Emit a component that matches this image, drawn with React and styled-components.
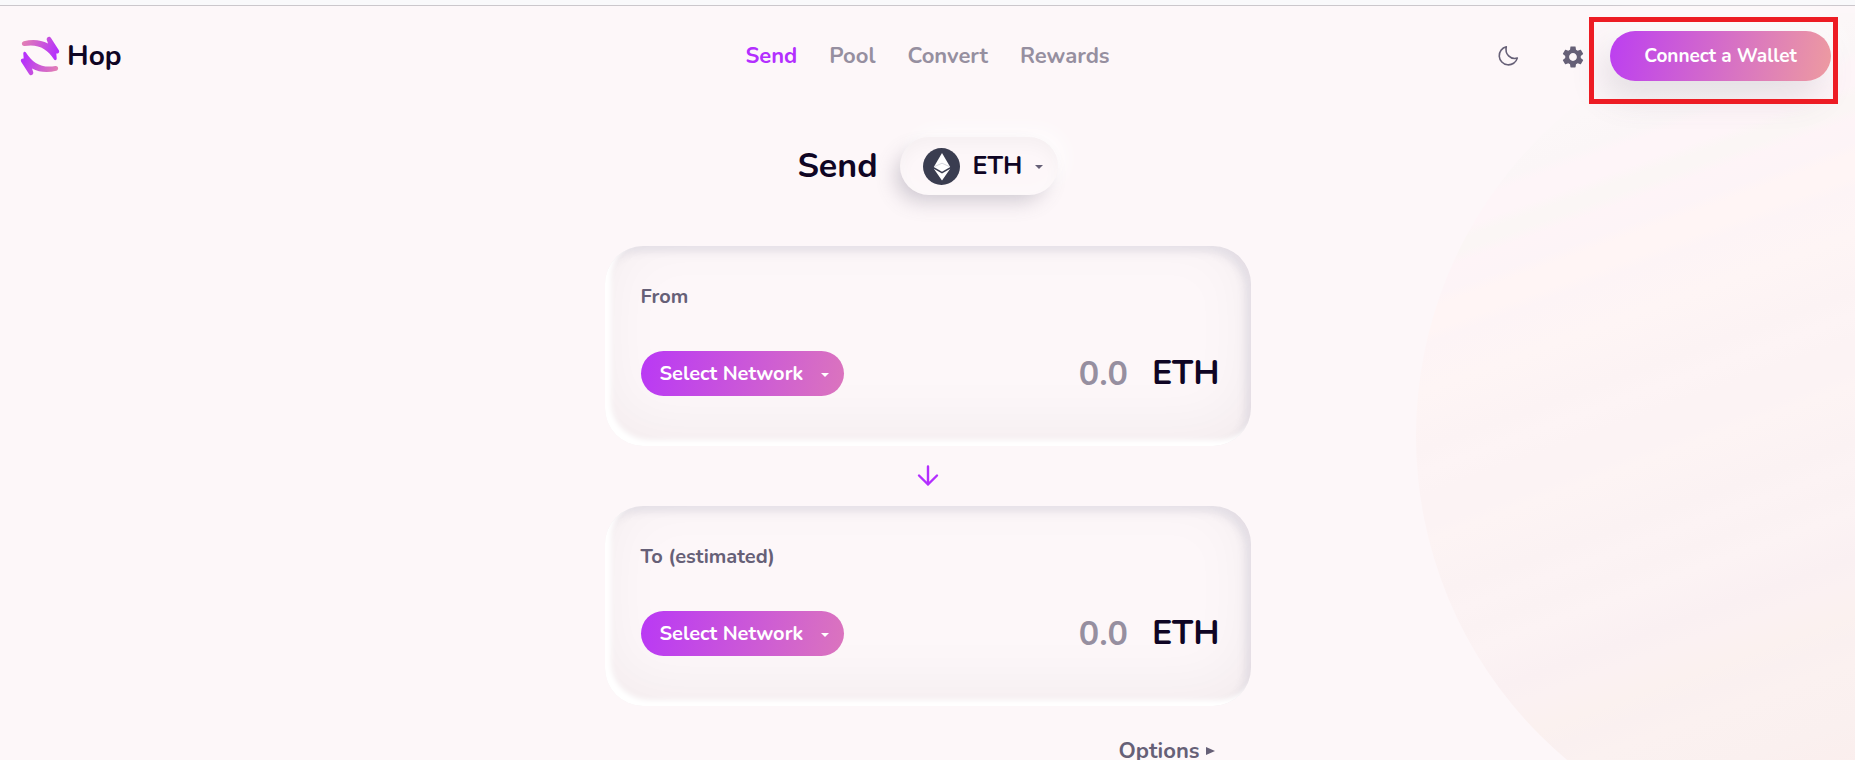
import React from 'react';
import styled, { createGlobalStyle } from 'styled-components';

const ink = '#0f0524';
const muted = '#666077';
const faded = '#968fa0';
const purple = '#b32eff';
const brand = 'linear-gradient(99.85deg, #b32eff -18%, #f2a498 110%)';

const GlobalStyle = createGlobalStyle`
  *, *::before, *::after { box-sizing: border-box; }
  body {
    margin: 0;
    background: #fdf7f9;
    color: ${ink};
    font-family: Nunito, Lato, sans-serif;
    font-weight: 700;
  }
  button, input, select { font: inherit; color: inherit; }
`;

const Page = styled.div`
  position: relative;
  min-height: 100vh;
  max-height: 100vh;
  overflow: hidden;
  isolation: isolate;
`;

const Planet = styled.div`
  position: absolute;
  z-index: -1;
  top: 13px;
  right: -407px;
  width: 846px;
  height: 846px;
  border-radius: 50%;
  background: linear-gradient(
    160deg,
    #fdf7f9 8%,
    #fcf7f8 14%,
    #fbf6f7 17%,
    #fef5f8 18%,
    #fef5f8 20%,
    #fbf6f5 21%,
    #fbf6f5 22%,
    #fef4f7 23%,
    #fdf4f7 25%,
    #fff5f5 26%,
    #fff5f5 28%,
    #fdf4f6 29%,
    #fef5f5 33%,
    #fcf3f4 38%,
    #fdf4f5 40%,
    #fcf3f4 42%,
    #fcf3f4 45%,
    #fdf4f4 46%,
    #fbf2f3 51%,
    #fcf3f4 53%,
    #fbf2f3 55%,
    #fcf3f4 57%,
    #faf0f2 61%,
    #fbf1f2 63%,
    #fbf1ef 66%,
    #faf0f0 68%,
    #fbf1f0 70%,
    #faf0ef 75%,
    #fbeeed 80%,
    #fbeded 90%
  );
`;

const WindowEdge = styled.div`
  height: 6px;
  background: #f9f9fb;
  border-bottom: 1px solid #cbc7cc;
`;

const Header = styled.header`
  display: grid;
  grid-template-columns: 1fr auto 1fr;
  align-items: center;
  height: 100px;
  padding: 0 24px;
`;

const Brand = styled.a`
  display: flex;
  align-items: center;
  gap: 7px;
  justify-self: start;
  margin-left: -4px;
  color: ${ink};
  font-size: 28px;
  line-height: 40px;
  text-decoration: none;
`;

const Nav = styled.nav`
  display: flex;
  gap: 32px;
`;

const NavLink = styled.a`
  color: ${(p) => (p.$active ? purple : faded)};
  font-size: 22px;
  line-height: 30px;
  text-decoration: none;
`;

const Tools = styled.div`
  display: flex;
  align-items: center;
  justify-self: end;
  gap: 26px;
`;

const IconButton = styled.button`
  display: grid;
  place-items: center;
  width: 24px;
  height: 24px;
  padding: 0;
  border: 0;
  background: none;
  color: ${muted};
  cursor: pointer;

  & + & { margin-left: 14px; }
`;

const WalletArea = styled.div`
  position: relative;
`;

const WalletButton = styled.button`
  display: block;
  width: 221px;
  height: 50px;
  border: 0;
  border-radius: 25px;
  background: ${brand};
  box-shadow:
    -8px 16px 34px rgba(102, 96, 119, 0.16),
    6px -8px 30px rgba(255, 255, 255, 0.8);
  color: #fff;
  font-size: 19px;
  cursor: pointer;
`;

const Highlight = styled.span`
  position: absolute;
  inset: -14px -7px -23px -21px;
  border: 5px solid #ed1c24;
  pointer-events: none;
`;

const Main = styled.main`
  display: flex;
  flex-direction: column;
  align-items: center;
  padding-top: 31px;
`;

const TitleRow = styled.div`
  display: flex;
  align-items: center;
  gap: 22px;
`;

const Title = styled.h1`
  margin: 0;
  font-size: 34px;
  font-weight: 700;
  line-height: 46px;
`;

const TokenPicker = styled.div`
  display: flex;
  align-items: center;
  position: relative;
  width: 158px;
  height: 58px;
  padding-left: 23px;
  border-radius: 29px;
  background: #fdf7f9;
  box-shadow:
    inset 0 -8px 16px rgba(255, 255, 255, 0.3),
    inset 0 8px 16px rgba(47, 19, 0, 0.03),
    -8px 10px 20px -4px rgba(102, 96, 119, 0.3),
    8px -8px 20px rgba(255, 255, 255, 0.7);
`;

const TokenSelect = styled.select`
  position: absolute;
  inset: 0;
  width: 100%;
  padding: 0 16px 0 73px;
  appearance: none;
  border: 0;
  border-radius: 29px;
  background: transparent;
  font-size: 25px;
  cursor: pointer;
`;

const Caret = styled.svg`
  position: absolute;
  top: 50%;
  right: 15px;
  width: 8px;
  height: 4px;
  margin-top: -1px;
  fill: ${(p) => p.$color};
  pointer-events: none;
`;

const Card = styled.section`
  display: flex;
  flex-direction: column;
  justify-content: space-between;
  width: 646px;
  max-width: 100%;
  height: 200px;
  padding: 37px 31px 50px 36px;
  border-radius: 38px;
  box-shadow:
    inset 6px -6px 5px #ffffff,
    inset -6px 6px 8px rgba(102, 96, 140, 0.12),
    inset 0 -16px 64px rgba(47, 19, 0, 0.05),
    inset 0 0 30px rgba(47, 19, 0, 0.01);
`;

const CardLabel = styled.label`
  color: ${muted};
  font-size: 20px;
  line-height: 28px;
`;

const CardRow = styled.div`
  display: flex;
  align-items: center;
  height: 45px;
`;

const NetworkPicker = styled.div`
  position: relative;
  flex: none;
  width: 203px;
  height: 45px;
`;

const NetworkSelect = styled.select`
  width: 100%;
  height: 100%;
  padding: 0 32px 0 19px;
  appearance: none;
  border: 0;
  border-radius: 23px;
  background: linear-gradient(99.85deg, #b32eff -18%, #dc76bc 103%);
  color: #fff;
  font-size: 20px;
  cursor: pointer;

  option { color: ${ink}; }
`;

const Amount = styled.input`
  flex: 1;
  min-width: 0;
  height: 45px;
  margin-right: 24px;
  padding: 0;
  border: 0;
  outline: 0;
  background: none;
  font-size: 34px;
  text-align: right;

  &::placeholder { color: ${faded}; opacity: 1; }
`;

const Unit = styled.span`
  font-size: 34px;
  line-height: 45px;
`;

const SwapButton = styled.button`
  display: grid;
  place-items: center;
  width: 60px;
  height: 60px;
  padding: 0;
  border: 0;
  background: none;
  color: ${purple};
  cursor: pointer;
`;

const Cards = styled.div`
  display: flex;
  flex-direction: column;
  align-items: center;
  width: 100%;
  padding-top: 51px;
`;

const OptionsRow = styled.div`
  display: flex;
  justify-content: flex-end;
  width: 646px;
  max-width: 100%;
  padding: 30px 36px;
`;

const OptionsButton = styled.button`
  display: flex;
  align-items: center;
  gap: 6px;
  padding: 0;
  border: 0;
  background: none;
  color: ${muted};
  font-size: 22px;
  line-height: 30px;
  cursor: pointer;
`;

function HopLogo() {
  return (
    <svg width="40" height="40" viewBox="0 0 40 40" aria-hidden="true">
      <defs>
        <linearGradient id="hop-a" x1="3" y1="6" x2="35" y2="20" gradientUnits="userSpaceOnUse">
          <stop offset="0" stopColor="#e27fb4" />
          <stop offset="1" stopColor="#b632fb" />
        </linearGradient>
        <linearGradient id="hop-b" x1="37" y1="34" x2="5" y2="20" gradientUnits="userSpaceOnUse">
          <stop offset="0" stopColor="#e27fb4" />
          <stop offset="1" stopColor="#b632fb" />
        </linearGradient>
      </defs>
      <path
        fill="url(#hop-a)"
        d="M3.8 5.2C12 3 21 3.600 28 7.500L26.800 4C26 1.200 29.500-.8 31 2L38.700 14C40 16 38.500 18 36.300 17.500L36.700 22.300C36.800 24.300 34.800 24.800 33.900 23.300C27.500 13 18 7.500 4.600 10C1.200 10.300 1 6 3.800 5.200Z"
      />
      <path
        fill="url(#hop-b)"
        d="M36.200 34.800C28 37 19 36.400 12 32.500L13.200 36C14 38.800 10.500 40.800 9 38L1.300 26C0 24 1.500 22 3.700 22.500L3.300 17.700C3.200 15.700 5.200 15.200 6.100 16.700C12.500 27 22 32.500 35.400 30C38.800 29.700 39 34 36.200 34.800Z"
      />
    </svg>
  );
}

function MoonIcon() {
  return (
    <svg width="22" height="22" viewBox="0 0 22 22" fill="none" aria-hidden="true">
      <path
        d="M9.300 1.700A9.200 9.200 0 1 0 20.300 13.100C13.500 14.900 7.600 9.200 9.300 1.700Z"
        stroke="currentColor"
        strokeWidth="1.600"
        strokeLinejoin="round"
      />
    </svg>
  );
}

function GearIcon() {
  return (
    <svg width="26" height="26" viewBox="0 0 24 24" fill="currentColor" aria-hidden="true">
      <path d="M19.140 12.940c.04-.3.060-.61.060-.94 0-.32-.02-.64-.07-.94l2.030-1.580c.18-.14.230-.41.120-.61l-1.920-3.320c-.12-.22-.37-.29-.59-.22l-2.390.96c-.5-.38-1.030-.7-1.620-.94l-.36-2.540c-.04-.24-.24-.41-.48-.41h-3.840c-.24 0-.43.170-.47.410l-.36 2.540c-.59.240-1.130.570-1.620.940l-2.390-.96c-.22-.08-.47 0-.59.220L2.740 8.870c-.12.210-.08.470.120.610l2.030 1.580c-.05.300-.09.630-.09.940s.02.640.070.940l-2.030 1.580c-.18.140-.23.410-.12.610l1.920 3.320c.12.220.370.290.590.220l2.390-.96c.5.380 1.030.700 1.620.940l.36 2.540c.05.240.240.410.480.410h3.840c.24 0 .44-.17.470-.41l.36-2.540c.59-.24 1.130-.56 1.620-.94l2.390.96c.22.080.470 0 .59-.22l1.920-3.320c.12-.22.070-.47-.12-.61l-2.010-1.580zM12 15.600c-1.980 0-3.600-1.620-3.600-3.600s1.620-3.600 3.600-3.600 3.600 1.620 3.600 3.600-1.620 3.600-3.600 3.600z" />
    </svg>
  );
}

function EthIcon() {
  return (
    <svg width="37" height="37" viewBox="0 0 37 37" aria-hidden="true">
      <circle cx="18.500" cy="18.500" r="18.500" fill="#3a3d50" />
      <path fill="#fff" d="M19 5L27.200 19L19 23.800L10.800 19Z" />
      <path fill="#fff" d="M10.800 20.800L19 25.600L27.200 20.800L19 32.400Z" />
      <path fill="none" stroke="#c9cad2" strokeWidth=".8" d="M11.500 18.600L19 15.200L26.500 18.600" />
    </svg>
  );
}

function DropCaret({ color }) {
  return (
    <Caret $color={color} viewBox="0 0 8 4" aria-hidden="true">
      <path d="M0 0H8L4 4Z" />
    </Caret>
  );
}

function TransferCard({ id, label }) {
  return (
    <Card>
      <CardLabel htmlFor={`${id}-amount`}>{label}</CardLabel>
      <CardRow>
        <NetworkPicker>
          <NetworkSelect aria-label={`${label} network`} defaultValue="">
            <option value="">Select Network</option>
            <option value="mainnet">Ethereum</option>
            <option value="polygon">Polygon</option>
            <option value="optimism">Optimism</option>
          </NetworkSelect>
          <DropCaret color="#fff" />
        </NetworkPicker>
        <Amount id={`${id}-amount`} placeholder="0.0" inputMode="decimal" />
        <Unit>ETH</Unit>
      </CardRow>
    </Card>
  );
}

const links = ['Send', 'Pool', 'Convert', 'Rewards'];

export default function App() {
  return (
    <Page>
      <GlobalStyle />
      <Planet />
      <WindowEdge />
      <Header>
        <Brand href="#home">
          <HopLogo />
          Hop
        </Brand>
        <Nav>
          {links.map((name, i) => (
            <NavLink key={name} href={`#${name.toLowerCase()}`} $active={i === 0}>
              {name}
            </NavLink>
          ))}
        </Nav>
        <Tools>
          <IconButton aria-label="Toggle dark mode">
            <MoonIcon />
          </IconButton>
          <IconButton aria-label="Settings">
            <GearIcon />
          </IconButton>
          <WalletArea>
            <WalletButton>Connect a Wallet</WalletButton>
            <Highlight />
          </WalletArea>
        </Tools>
      </Header>
      <Main>
        <TitleRow>
          <Title>Send</Title>
          <TokenPicker>
            <EthIcon />
            <TokenSelect aria-label="Token" defaultValue="ETH">
              <option>ETH</option>
              <option>DAI</option>
            </TokenSelect>
            <DropCaret color={muted} />
          </TokenPicker>
        </TitleRow>
        <Cards>
          <TransferCard id="from" label="From" />
          <SwapButton aria-label="Swap direction">
            <svg width="24" height="24" viewBox="0 0 24 24" fill="none" aria-hidden="true">
              <path
                d="M12 2.500V20.500M3 11.500L12 20.500L21 11.500"
                stroke="currentColor"
                strokeWidth="2.400"
                strokeLinecap="round"
                strokeLinejoin="round"
              />
            </svg>
          </SwapButton>
          <TransferCard id="to" label="To (estimated)" />
          <OptionsRow>
            <OptionsButton>
              Options
              <svg width="9" height="8" viewBox="0 0 9 8" fill="currentColor" aria-hidden="true">
                <path d="M0 0L9 4L0 8Z" />
              </svg>
            </OptionsButton>
          </OptionsRow>
        </Cards>
      </Main>
    </Page>
  );
}
